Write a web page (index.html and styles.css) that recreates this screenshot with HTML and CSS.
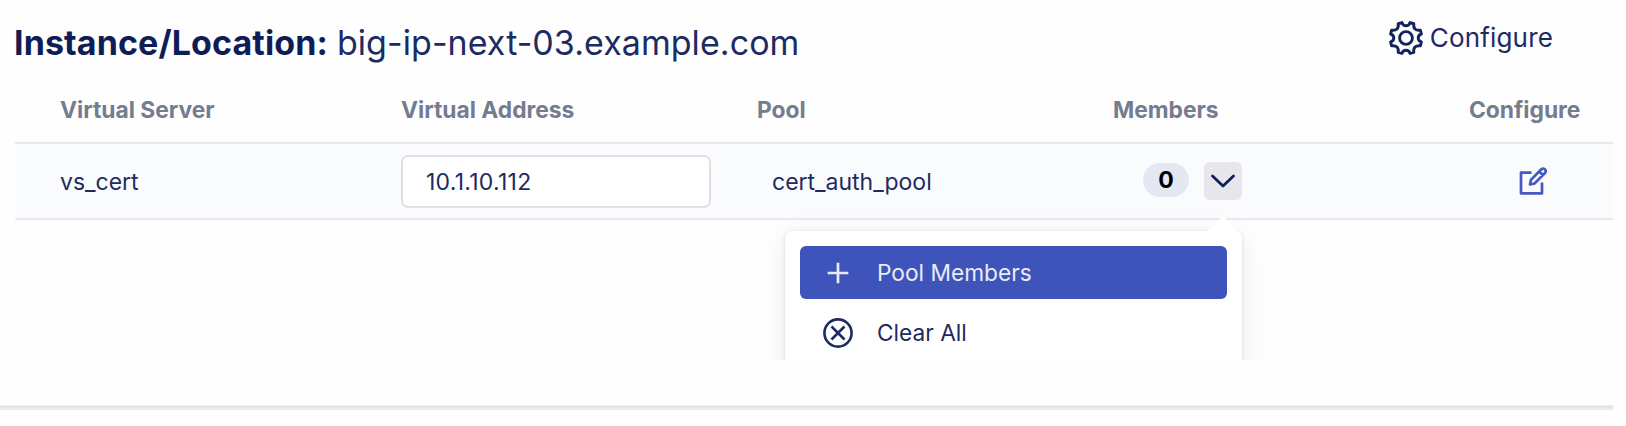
FILE: index.html
```html
<!DOCTYPE html>
<html lang="en">
<head>
<meta charset="utf-8">
<title>Instance configuration</title>
<link rel="stylesheet" href="styles.css">
</head>
<body>
<main class="page">
  <header class="head">
    <h1 class="title"><b class="title-label">Instance/Location:</b><span class="title-host">big-ip-next-03.example.com</span></h1>
    <button class="configure">
      <svg class="gear" viewBox="0 0 36 36" fill="none" stroke="currentColor" stroke-width="2.900" stroke-linejoin="round">
        <circle cx="18" cy="18" r="6.400"/>
        <path d="M10.200 3.600L14 2.600Q15 5.800 18 5.800T22 2.600L25.800 3.600Q25.300 7.300 27 9T32.400 10.200L33.400 14Q30.200 15 30.200 18T33.400 22L32.400 25.800Q28.700 25.300 27 27T25.800 32.400L22 33.400Q21 30.200 18 30.200T14 33.400L10.200 32.400Q10.700 28.700 9 27T3.600 25.800L2.600 22Q5.800 21 5.800 18T2.600 14L3.600 10.200Q7.300 10.700 9 9T10.200 3.600Z"/>
      </svg>
      <span>Configure</span>
    </button>
  </header>
  <section class="table">
    <div class="row labels">
      <span>Virtual Server</span><span>Virtual Address</span><span>Pool</span><span>Members</span><span>Configure</span>
    </div>
    <div class="row data">
      <span class="server">vs_cert</span>
      <span class="address">10.1.10.112</span>
      <span class="pool">cert_auth_pool</span>
      <div class="members">
        <span class="count">0</span>
        <button class="toggle"><svg viewBox="0 0 38 38" fill="none" stroke="currentColor" stroke-width="2.800" stroke-linecap="round" stroke-linejoin="round"><path d="M8.500 14L19 24L29.500 14"/></svg></button>
      </div>
      <svg class="edit" viewBox="0 0 28 28" fill="none" stroke="currentColor" stroke-width="2.700" stroke-linejoin="round"><path d="M12.500 5.600H2V26.300H23V15.500"/><path d="M11 17.500L11.900 12.900L22.300 2.300Q24 .9 25.900 2.300Q27.500 4.200 26 6L15.500 16.500ZM20.300 4.500L23.800 8"/></svg>
    </div>
  </section>
  <div class="menu-clip">
    <div class="menu">
      <svg class="caret" viewBox="0 0 30 15"><path d="M0 15L15 0L30 15Z" fill="#fff"/></svg>
      <div class="item active">
        <svg viewBox="0 0 30 30" fill="none" stroke="currentColor" stroke-width="2.700"><path d="M4.700 15H25.300M15 4.700V25.300"/></svg>
        <span>Pool Members</span>
      </div>
      <div class="item">
        <svg viewBox="0 0 30 30" fill="none" stroke="currentColor" stroke-width="2.600"><circle cx="15" cy="15" r="13.600"/><path d="M8.500 8.500L21.500 21.500M21.500 8.500L8.500 21.500"/></svg>
        <span>Clear All</span>
      </div>
    </div>
  </div>
  <div class="divider"></div>
</main>
</body>
</html>
```
FILE: styles.css
```css
* { box-sizing: border-box; }
body { margin: 0; background: #fefefe; color: #1d2b63; font-family: Inter, "Liberation Sans", sans-serif; }
button { border: 0; padding: 0; background: none; color: inherit; font: inherit; }
.page { position: relative; width: 1613px; height: 426px; display: flex; flex-direction: column; overflow: hidden; }
.head { height: 80px; flex: none; display: flex; justify-content: space-between; padding-left: 14px; padding-right: 60px; white-space: nowrap; }
.title { margin: 23px 0 0; display: flex; gap: 9px; height: 42px; font-size: 34px; line-height: 40px; font-weight: 400; }
.title-label { font-weight: 700; color: #0f1d57; letter-spacing: 0.11px; }
.title-host { letter-spacing: 0.06px; }
.configure { display: flex; align-items: center; gap: 6px; height: 36px; margin-top: 20px; font-size: 26px; letter-spacing: 0.17px; }
.configure span { margin-top: -1px; }
.gear { width: 36px; height: 36px; color: #14235d; }
.table { margin-left: 15px; flex: none; }
.row { display: grid; grid-template-columns: 386px 356px 356px 356px 1fr; align-items: center; white-space: nowrap; }
.labels { height: 62px; padding-bottom: 3px; font-size: 22.8px; font-weight: 700; color: #747c90; }
.labels > span:first-child, .server { padding-left: 45px; }
.data { height: 78px; border-top: 2px solid #e8e8ee; border-bottom: 2px solid #e8e8ee; background: #fafbfd; font-size: 23px; }
.server, .pool { padding-top: 1px; }
.address { width: 310px; height: 53px; padding: 1px 0 0 23px; display: flex; align-items: center; border: 2px solid #dfe0e7; border-radius: 7px; background: #fff; letter-spacing: 0.26px; }
.pool { padding-left: 15px; }
.members { display: flex; align-items: center; gap: 15px; padding-left: 30px; }
.count { display: flex; align-items: center; justify-content: center; width: 46px; height: 34px; margin-bottom: 3px; border-radius: 17px; background: #e5e8f3; color: #000; font-weight: 700; font-size: 23px; }
.toggle { width: 38px; height: 38px; border-radius: 6px; background: #e6e6ec; color: #10205c; }
.toggle svg { display: block; }
.edit { width: 28px; height: 28px; margin-left: 50px; color: #4658c2; }
.menu-clip { position: absolute; left: 745px; top: 196px; width: 540px; height: 164px; overflow: hidden; }
.menu { position: absolute; left: 40px; top: 35px; width: 457px; height: 200px; padding: 15px; border-radius: 7px; background: #fff; box-shadow: 0 4px 28px rgba(0,0,0,.07), 0 1px 4px rgba(30,30,70,.13); }
.caret { position: absolute; right: 4px; top: -15px; width: 30px; height: 15px; }
.item { display: flex; align-items: center; gap: 24px; height: 53px; margin-bottom: 7px; padding-left: 23px; border-radius: 6px; font-size: 22.7px; white-space: nowrap; }
.item svg { width: 30px; height: 30px; }
.active { background: #3e54bb; color: #e9ebf8; }
.divider { margin-top: auto; margin-bottom: 16px; height: 5px; border-top: 1px solid #eeeef1; border-bottom: 2px solid #eceaf0; background: #e3e3e8; }
```
